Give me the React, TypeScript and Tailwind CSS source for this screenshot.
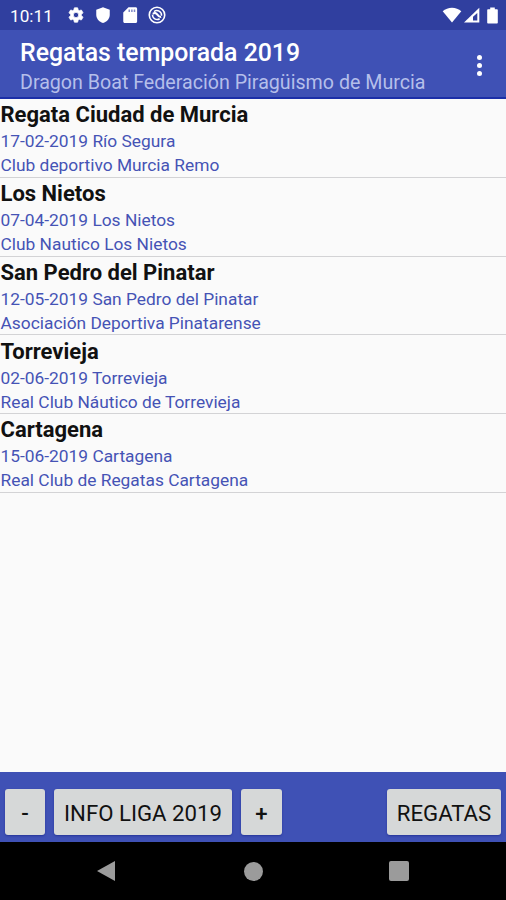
import type { ReactNode } from "react";

type Regata = {
  name: string;
  date: string;
  place: string;
  club: string;
};

const regatas: Regata[] = [
  { name: "Regata Ciudad de Murcia", date: "17-02-2019", place: "Río Segura", club: "Club deportivo Murcia Remo" },
  { name: "Los Nietos", date: "07-04-2019", place: "Los Nietos", club: "Club Nautico Los Nietos" },
  { name: "San Pedro del Pinatar", date: "12-05-2019", place: "San Pedro del Pinatar", club: "Asociación Deportiva Pinatarense" },
  { name: "Torrevieja", date: "02-06-2019", place: "Torrevieja", club: "Real Club Náutico de Torrevieja" },
  { name: "Cartagena", date: "15-06-2019", place: "Cartagena", club: "Real Club de Regatas Cartagena" },
];

function StatusBar() {
  return (
    <div className="flex h-[30px] shrink-0 items-center bg-[#303f9f] pl-[10px] pr-[8px] text-white">
      <span className="w-[57px] pt-[3px] text-[17.2px] leading-none">10:11</span>
      <svg className="h-[18px] w-[18px]" viewBox="0 0 24 24" fill="currentColor">
        <path
          stroke="currentColor"
          strokeWidth="1"
          d="M19.14 12.94c.04-.3.06-.61.06-.94 0-.32-.02-.64-.07-.94l2.03-1.58c.18-.14.23-.41.12-.61l-1.92-3.32c-.12-.22-.37-.29-.59-.22l-2.39.96c-.5-.38-1.03-.7-1.62-.94l-.36-2.54c-.04-.24-.24-.41-.48-.41h-3.84c-.24 0-.43.17-.47.41l-.36 2.54c-.59.24-1.13.57-1.62.94l-2.39-.96c-.22-.08-.47 0-.59.22L2.74 8.87c-.12.21-.08.47.12.61l2.03 1.58c-.05.3-.09.63-.09.94s.02.64.07.94l-2.03 1.58c-.18.14-.23.41-.12.61l1.92 3.32c.12.22.37.29.59.22l2.39-.96c.5.38 1.03.7 1.62.94l.36 2.54c.05.24.24.41.48.41h3.84c.24 0 .44-.17.47-.41l.36-2.54c.59-.24 1.13-.56 1.62-.94l2.39.96c.22.08.47 0 .59-.22l1.92-3.32c.12-.22.07-.47-.12-.61l-2.01-1.58zM12 15.6A3.6 3.6 0 1 1 12 8.400a3.600 3.600 0 0 1 0 7.200z"
        />
      </svg>
      <svg className="ml-[9px] h-[18px] w-[18px]" viewBox="0 0 24 24" fill="currentColor">
        <path d="M12 1.500 3 5v6.500c0 5.300 3.800 9.600 9 11 5.200-1.400 9-5.700 9-11V5z" />
      </svg>
      <svg className="ml-[9px] h-[18px] w-[18px]" viewBox="0 0 24 24" fill="currentColor">
        <path d="M19.500 1.500h-9.500L3 8.500V20.500c0 1.100.9 2 2 2h14.500c1.100 0 2-.9 2-2v-17c0-1.100-.9-2-2-2z" />
        <path d="M10 4.500h2v3.500h-2zM13.500 4.500h2v3.500h-2zM17 4.500h2v3.500h-2z" fill="#7f89c8" />
      </svg>
      <svg className="ml-[9px] h-[18px] w-[18px]" viewBox="0 0 24 24" fill="none" stroke="currentColor">
        <circle cx="12" cy="12" r="10.300" strokeWidth="2.200" />
        <path d="M15.500 17A6.200 6.200 0 0 1 6 11.500M8 7.500A6.200 6.200 0 0 1 18 13" strokeWidth="2" />
        <path d="M6.500 10.500C9 8.500 11 9.500 12.500 11.500s3 3.500 5 3" strokeWidth="2.800" />
      </svg>
      <svg className="ml-auto h-[16px] w-[20px]" viewBox="0 0 20 16" fill="currentColor">
        <path d="M10 15.500.7 4.300C3.200 1.900 6.500.7 10 .7s6.800 1.200 9.300 3.600z" />
      </svg>
      <svg className="ml-[1px] h-[16px] w-[17px]" viewBox="0 0 17 16">
        <path d="M16.300.7v14.800H1z" fill="#fff" />
        <path d="M14.300 6v7.500H10V9.800z" fill="#303f9f" />
      </svg>
      <svg className="ml-[7px] h-[17px] w-[11px]" viewBox="0 0 11 17" fill="currentColor">
        <path d="M3.200.5h4.600v1.800H10c.5 0 .8.300.8.800v12.700c0 .5-.3.800-.8.800H1c-.5 0-.8-.3-.8-.8V3.100c0-.5.300-.8.800-.8h2.200z" />
      </svg>
    </div>
  );
}

function Toolbar() {
  return (
    <header className="flex h-[69px] shrink-0 items-center justify-between border-b-2 border-[#1c2fa8] bg-[#3f51b5] pt-[3px] pl-5 pr-[24px]">
      <div className="pt-[3px] whitespace-nowrap">
        <h1 className="text-[24.850px] leading-[31px] font-medium text-white">Regatas temporada 2019</h1>
        <p className="text-[19.650px] leading-[29px] text-[#b5bfea]">Dragon Boat Federación Piragüismo de Murcia</p>
      </div>
      <button className="flex flex-col items-center gap-[3px]" aria-label="Más opciones">
        <span className="size-[5px] rounded-full bg-white" />
        <span className="size-[5px] rounded-full bg-white" />
        <span className="size-[5px] rounded-full bg-white" />
      </button>
    </header>
  );
}

function RegataRow({ regata }: { regata: Regata }) {
  return (
    <li className="h-[78.750px] border-b border-[#d3d3d5] pl-[0.5px] whitespace-nowrap">
      <h2 className="pt-[1.400px] text-[22px] leading-[29px] font-bold text-[#111]">{regata.name}</h2>
      <p className="text-[17.350px] leading-[24px] text-[#4553b5]">
        {regata.date} {regata.place}
      </p>
      <p className="text-[17.350px] leading-[24px] text-[#4553b5]">{regata.club}</p>
    </li>
  );
}

function BarButton({ className, children }: { className: string; children: ReactNode }) {
  return (
    <button
      className={`h-[46px] rounded-[3px] bg-[#d6d8d8] text-center text-[22.200px] leading-[48px] whitespace-nowrap text-[#111] shadow-[0_1px_2px_#26359a] ${className}`}
    >
      {children}
    </button>
  );
}

export default function App() {
  return (
    <div className="flex h-[900px] w-[506px] flex-col overflow-hidden bg-[#fafafa] font-[Roboto,sans-serif]">
      <StatusBar />
      <Toolbar />
      <ul className="flex-1">
        {regatas.map((regata) => (
          <RegataRow key={regata.name} regata={regata} />
        ))}
      </ul>
      <div className="flex h-[70px] shrink-0 items-start bg-[#3f51b5] pt-[17px] pr-[5px] pl-[5px]">
        <BarButton className="w-[40px] font-medium">-</BarButton>
        <BarButton className="ml-[9px] w-[178px]">INFO LIGA 2019</BarButton>
        <BarButton className="ml-[9px] w-[41px] font-medium">+</BarButton>
        <BarButton className="ml-auto w-[114px]">REGATAS</BarButton>
      </div>
      {/* Android navigation */}
      <nav className="flex h-[58px] shrink-0 items-center bg-black pl-[96px] text-[#9b9b9b]">
        <svg className="h-[22px] w-[20px]" viewBox="0 0 20 22" fill="currentColor">
          <path d="M19 1v20L1 11z" />
        </svg>
        <span className="ml-[128px] size-[19px] rounded-full bg-current" />
        <span className="ml-[126px] size-[20px] rounded-[2px] bg-current" />
      </nav>
    </div>
  );
}
